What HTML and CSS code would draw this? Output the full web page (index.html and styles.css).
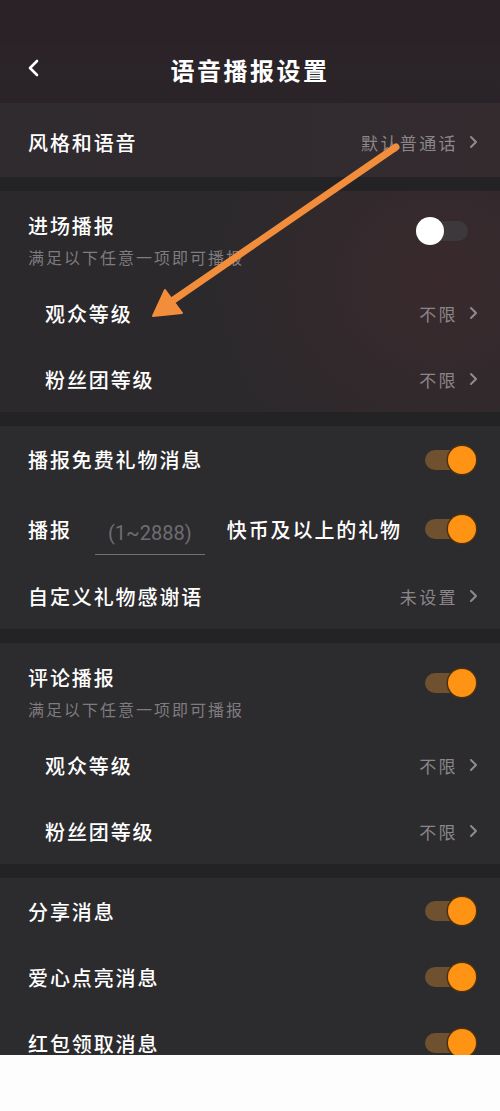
FILE: index.html
```html
<!DOCTYPE html>
<html lang="zh">
<head>
<meta charset="utf-8">
<title>语音播报设置</title>
<link rel="stylesheet" href="styles.css">
</head>
<body>
<div class="screen">
  <div class="status"></div>
  <div class="nav">
    <svg class="back" width="14" height="20" viewBox="0 0 14 20"><path d="M11 3 L4 10 L11 17" fill="none" stroke="#fff" stroke-width="2.6" stroke-linecap="round" stroke-linejoin="round"/></svg>
    <div class="nav-title">语音播报设置</div>
  </div>

  <div class="group g-top">
    <div class="row r-style">
      <span class="label">风格和语音</span>
      <span class="value">默认普通话</span>
      <svg class="chev" width="10" height="16" viewBox="0 0 10 16"><path d="M3 3 L8 8 L3 13" fill="none" stroke="#8f8b8e" stroke-width="2" stroke-linecap="round" stroke-linejoin="round"/></svg>
    </div>
  </div>

  <div class="group g-tint">
    <div class="head">
      <div class="head-text">
        <div class="label">进场播报</div>
        <div class="sub">满足以下任意一项即可播报</div>
      </div>
      <div class="switch off"><span class="track"></span><span class="knob"></span></div>
    </div>
    <div class="row indent">
      <span class="label">观众等级</span>
      <span class="value">不限</span>
      <svg class="chev" width="10" height="16" viewBox="0 0 10 16"><path d="M3 3 L8 8 L3 13" fill="none" stroke="#8f8b8e" stroke-width="2" stroke-linecap="round" stroke-linejoin="round"/></svg>
    </div>
    <div class="row indent">
      <span class="label">粉丝团等级</span>
      <span class="value">不限</span>
      <svg class="chev" width="10" height="16" viewBox="0 0 10 16"><path d="M3 3 L8 8 L3 13" fill="none" stroke="#8f8b8e" stroke-width="2" stroke-linecap="round" stroke-linejoin="round"/></svg>
    </div>
  </div>

  <div class="group">
    <div class="row r1">
      <span class="label">播报免费礼物消息</span>
      <div class="switch on"><span class="track"></span><span class="knob"></span></div>
    </div>
    <div class="row r2">
      <span class="label">播报</span>
      <span class="input">(1~2888)</span>
      <span class="label grow">快币及以上的礼物</span>
      <div class="switch on"><span class="track"></span><span class="knob"></span></div>
    </div>
    <div class="row r3">
      <span class="label">自定义礼物感谢语</span>
      <span class="value">未设置</span>
      <svg class="chev" width="10" height="16" viewBox="0 0 10 16"><path d="M3 3 L8 8 L3 13" fill="none" stroke="#8f8b8e" stroke-width="2" stroke-linecap="round" stroke-linejoin="round"/></svg>
    </div>
  </div>

  <div class="group">
    <div class="head">
      <div class="head-text">
        <div class="label">评论播报</div>
        <div class="sub">满足以下任意一项即可播报</div>
      </div>
      <div class="switch on"><span class="track"></span><span class="knob"></span></div>
    </div>
    <div class="row indent">
      <span class="label">观众等级</span>
      <span class="value">不限</span>
      <svg class="chev" width="10" height="16" viewBox="0 0 10 16"><path d="M3 3 L8 8 L3 13" fill="none" stroke="#8f8b8e" stroke-width="2" stroke-linecap="round" stroke-linejoin="round"/></svg>
    </div>
    <div class="row indent">
      <span class="label">粉丝团等级</span>
      <span class="value">不限</span>
      <svg class="chev" width="10" height="16" viewBox="0 0 10 16"><path d="M3 3 L8 8 L3 13" fill="none" stroke="#8f8b8e" stroke-width="2" stroke-linecap="round" stroke-linejoin="round"/></svg>
    </div>
  </div>

  <div class="group last">
    <div class="row">
      <span class="label">分享消息</span>
      <div class="switch on"><span class="track"></span><span class="knob"></span></div>
    </div>
    <div class="row">
      <span class="label">爱心点亮消息</span>
      <div class="switch on"><span class="track"></span><span class="knob"></span></div>
    </div>
    <div class="row">
      <span class="label">红包领取消息</span>
      <div class="switch on"><span class="track"></span><span class="knob"></span></div>
    </div>
  </div>

  <svg class="arrow" width="500" height="400" viewBox="0 0 500 400">
    <line x1="396" y1="147" x2="172" y2="301" stroke="#f28d3b" stroke-width="7" stroke-linecap="round"/>
    <polygon points="153,316 165,290 182,313" fill="#f28d3b" stroke="#f28d3b" stroke-width="2" stroke-linejoin="round"/>
  </svg>
</div>
</body>
</html>
```

FILE: styles.css
```css
* { box-sizing: border-box; }
html, body { margin: 0; padding: 0; background: #fdfdfd; }
body {
  width: 500px;
  height: 1111px;
  overflow: hidden;
  font-family: "Noto Sans CJK SC", "Noto Sans", sans-serif;
}
.screen {
  position: relative;
  width: 500px;
  height: 1055px;
  overflow: hidden;
  background: #232225;
  display: flex;
  flex-direction: column;
  gap: 14px;
}
.screen > * { flex-shrink: 0; }
.status {
  height: 45px;
  background: #2b2227;
  margin-bottom: -14px;
}
.nav {
  height: 58px;
  background: linear-gradient(#2b2328, #2a2428);
  display: flex;
  align-items: center;
  justify-content: center;
  position: relative;
  margin-bottom: -14px;
}
.back {
  position: absolute;
  left: 26px;
  top: 13px;
}
.nav-title {
  color: #ffffff;
  font-size: 24px;
  font-weight: 700;
  letter-spacing: 2.5px;
  margin-top: -9px;
}
.group {
  background: #2c2b2e;
  display: flex;
  flex-direction: column;
  position: relative;
}
.g-top { background: linear-gradient(90deg, #302b2f 0%, #312b2f 60%, #342b2f 100%); }
.g-tint {
  background:
    radial-gradient(ellipse 240px 220px at 440px 90px, rgba(70,42,46,0.55), rgba(70,42,46,0) 100%),
    #2b292c;
}
.row {
  height: 66px;
  display: flex;
  align-items: center;
  padding: 0 24px 0 28px;
}
.r-style { height: 74px; padding-top: 4px; }
.r1 { height: 67px; }
.r2 { height: 70px; padding-top: 2px; }
.r3 { height: 66px; }
.indent { padding-left: 45px; }
.label {
  color: #ffffff;
  font-size: 20px;
  font-weight: 500;
  letter-spacing: 1.9px;
  white-space: nowrap;
}
.value {
  margin-left: auto;
  color: #8a8689;
  font-size: 17px;
  letter-spacing: 2.4px;
}
.chev { margin-left: 10px; margin-right: -2px; }
.grow { flex: 1; }
.input {
  margin: 0 22px 0 23px;
  width: 110px;
  text-align: center;
  color: #6f6d71;
  font-family: Roboto, "Liberation Sans", sans-serif;
  font-size: 20px;
  line-height: 30px;
  border-bottom: 1.5px solid #727074;
  padding-bottom: 6px;
  margin-top: 14px;
}
.head {
  height: 89px;
  display: flex;
  align-items: flex-start;
  padding: 21px 24px 0 28px;
}
.head-text { flex: 1; }
.head .label { line-height: 28px; }
.sub {
  color: #7f7b7f;
  font-size: 16px;
  letter-spacing: 2px;
  line-height: 22px;
  margin-top: 6px;
}
.switch {
  position: relative;
  width: 52px;
  height: 30px;
  margin-left: auto;
  flex: none;
}
.head .switch { margin-top: 4px; }
.switch .track {
  position: absolute;
  top: 5px;
  height: 20px;
  border-radius: 10px;
}
.switch .knob {
  position: absolute;
  top: 1px;
  width: 28px;
  height: 28px;
  border-radius: 50%;
}
.switch.on .track { left: 1px; width: 46px; background: #6f5130; }
.switch.on .knob { right: 0; background: #ff9314; box-shadow: 0 0 0 1.5px #4a3214; }
.switch.off { margin-right: 8px; }
.switch.off .track { left: 5px; width: 47px; background: #3c383c; }
.switch.off .knob { left: 0; background: #ffffff; }
.arrow {
  position: absolute;
  left: 0; top: 0;
  z-index: 5;
  pointer-events: none;
}
```
